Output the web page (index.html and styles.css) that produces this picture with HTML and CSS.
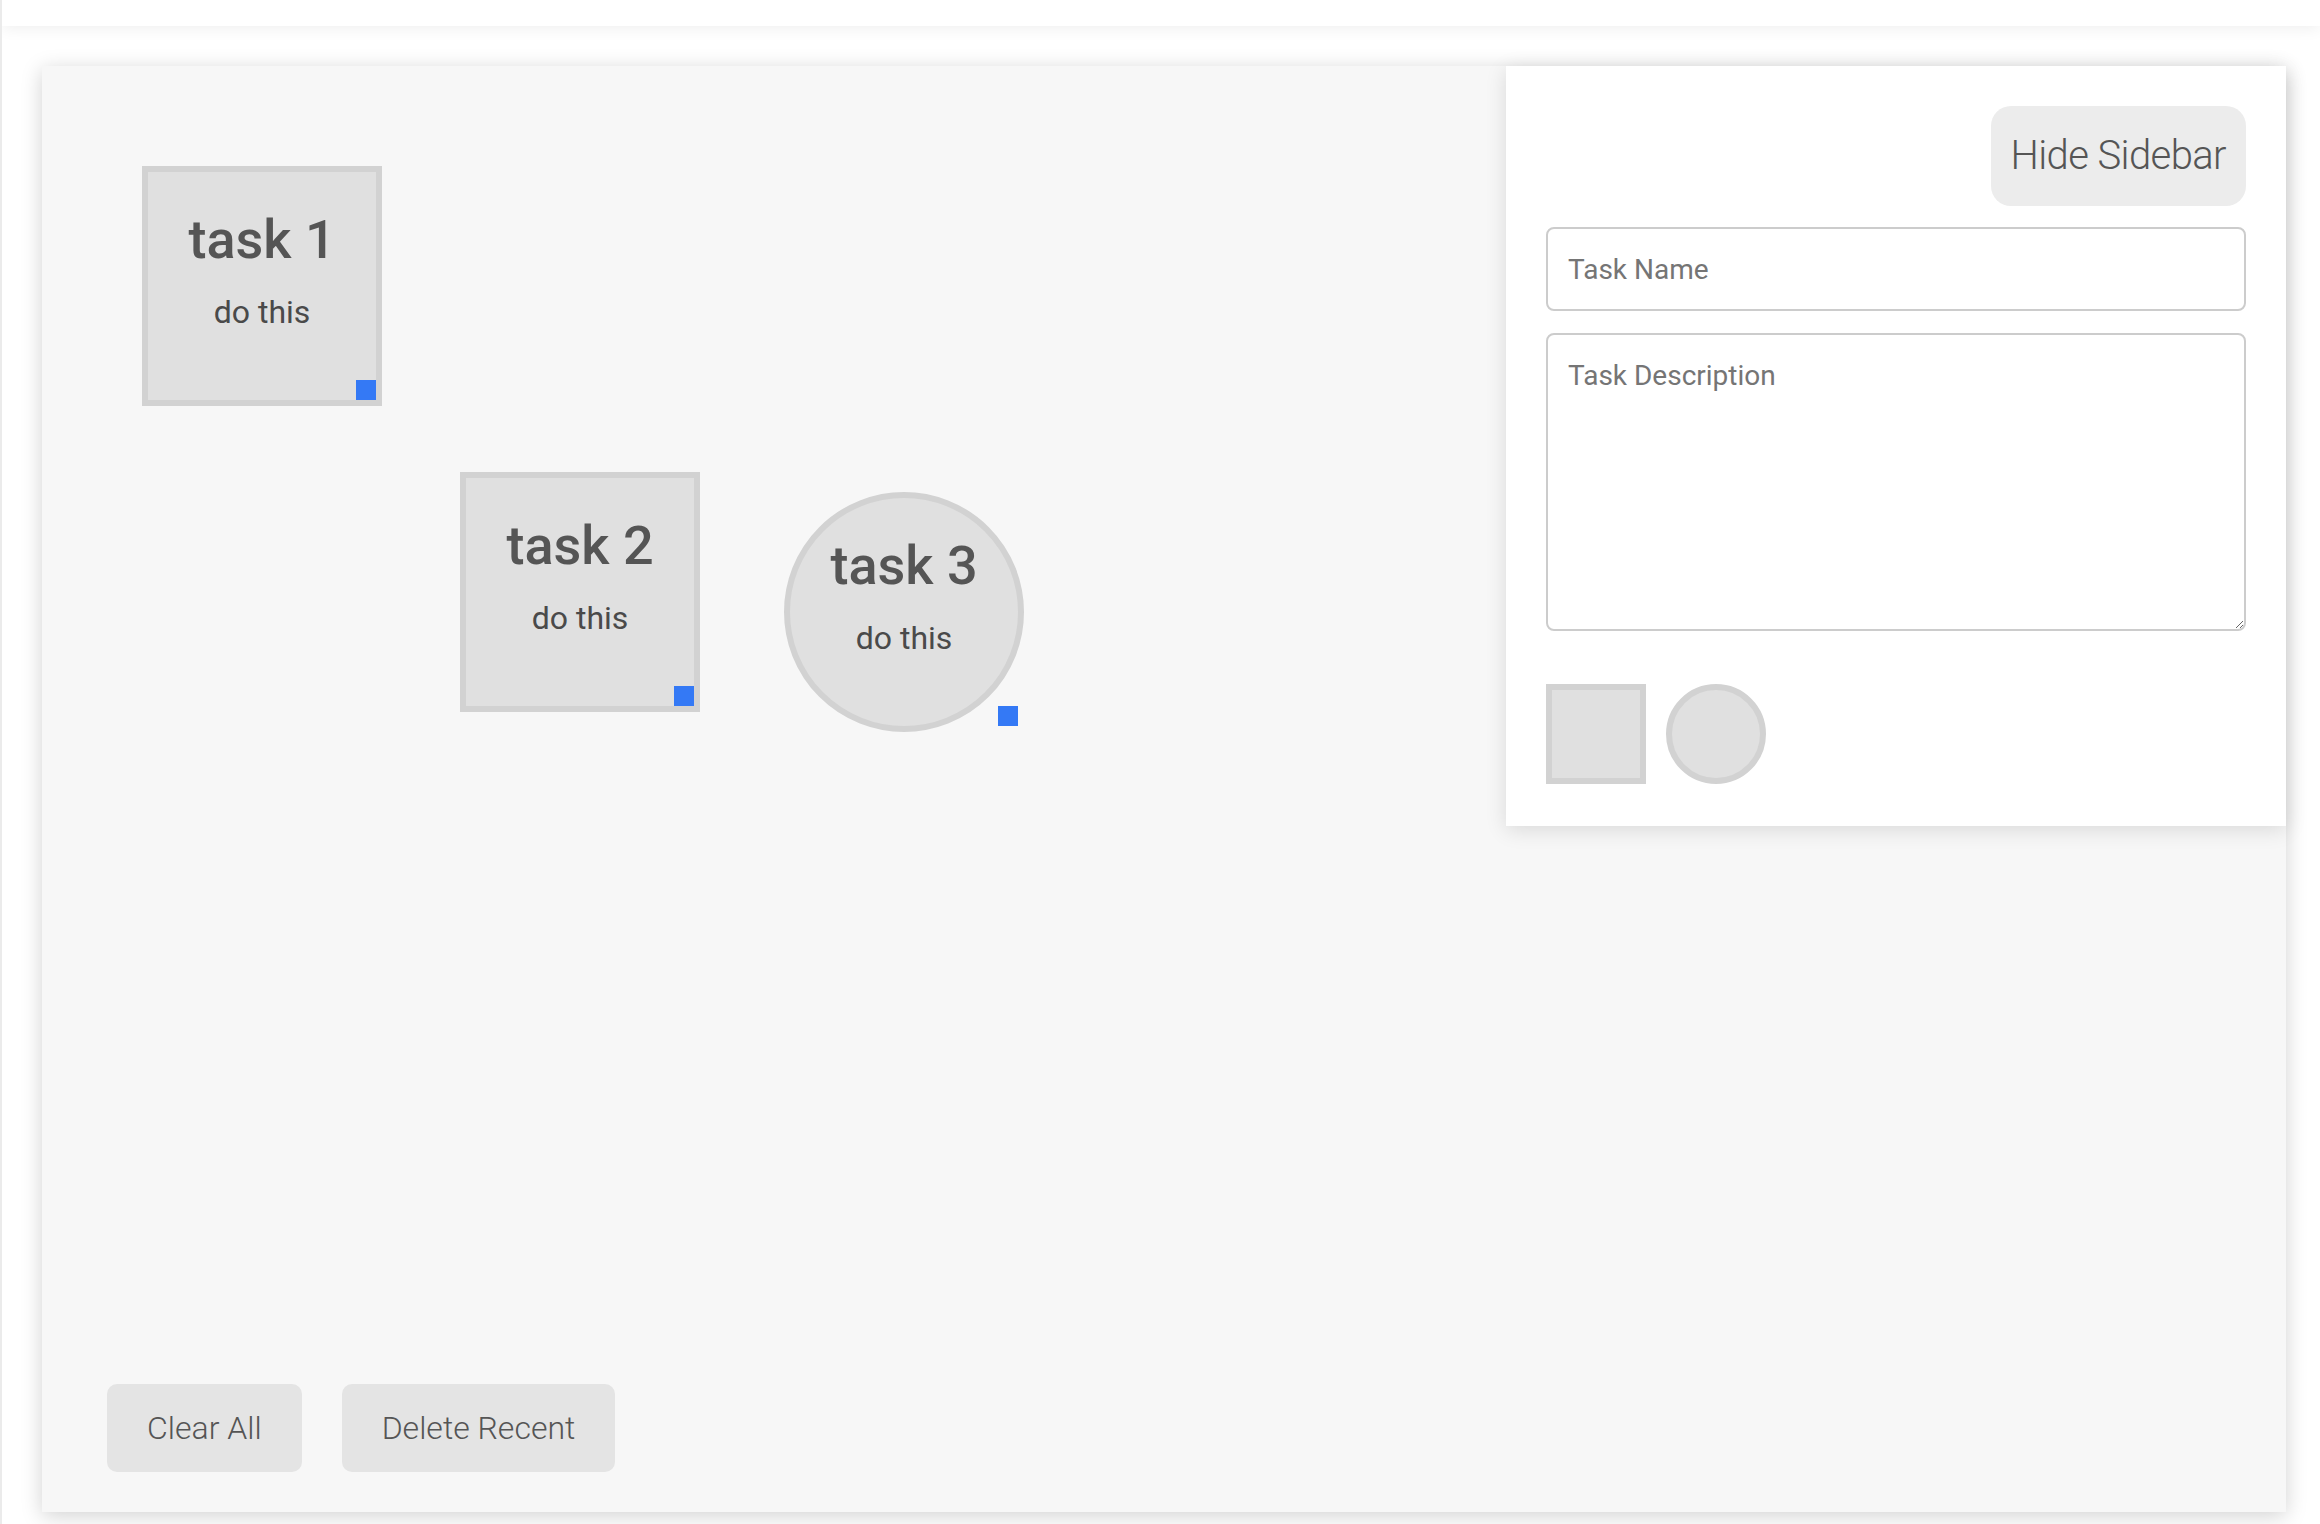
FILE: index.html
```html
<!DOCTYPE html>
<html lang="en">
<head>
<meta charset="utf-8">
<title>Task Board</title>
<link rel="stylesheet" href="styles.css">
</head>
<body>
<div class="page">
  <header class="topbar"></header>
  <main class="main">
    <section class="board">
      <div class="task task-square" style="left:100px;top:100px;">
        <h2 class="task-title">task 1</h2>
        <p class="task-desc">do this</p>
        <span class="handle"></span>
      </div>
      <div class="task task-square" style="left:418px;top:406px;">
        <h2 class="task-title">task 2</h2>
        <p class="task-desc">do this</p>
        <span class="handle"></span>
      </div>
      <div class="task task-circle" style="left:742px;top:426px;">
        <h2 class="task-title">task 3</h2>
        <p class="task-desc">do this</p>
        <span class="handle"></span>
      </div>

      <div class="actions">
        <button class="btn-soft">Clear All</button>
        <button class="btn-soft">Delete Recent</button>
      </div>

      <aside class="sidebar">
        <button class="btn-hide">Hide Sidebar</button>
        <input class="field field-name" type="text" placeholder="Task Name">
        <textarea class="field field-desc" placeholder="Task Description"></textarea>
        <div class="shapes">
          <span class="shape shape-square"></span>
          <span class="shape shape-circle"></span>
        </div>
      </aside>
    </section>
  </main>
</div>
</body>
</html>
```

FILE: styles.css
```css
* { box-sizing: border-box; }

html, body {
  margin: 0;
  padding: 0;
  background: #ffffff;
  font-family: Roboto, "Liberation Sans", Arial, sans-serif;
}

.page {
  border-left: 2px solid #ebebeb;
  min-height: 100vh;
  overflow: hidden;
}

.topbar {
  height: 26px;
  background: #ffffff;
  box-shadow: 0 2px 16px rgba(0, 0, 0, 0.07);
  position: relative;
  z-index: 1;
}

.main {
  padding: 40px 34px 40px 40px;
}

.board {
  position: relative;
  height: 1446px;
  background: #f7f7f7;
  box-shadow: 0 4px 20px rgba(0, 0, 0, 0.18);
  display: flex;
  flex-direction: column;
  justify-content: flex-end;
  padding: 0 0 40px 65px;
}

.task {
  position: absolute;
  width: 240px;
  height: 240px;
  background: #e0e0e0;
  border: 6px solid #d2d2d2;
  display: flex;
  flex-direction: column;
  align-items: center;
  padding-top: 41px;
  color: #555555;
}

.task-circle { border-radius: 50%; }

.task-title {
  margin: 0;
  font-size: 54px;
  line-height: 54px;
  font-weight: 500;
  color: #555555;
}

.task-desc {
  margin: 29px 0 0;
  font-size: 32px;
  line-height: 32px;
  font-weight: 400;
  color: #4a4a4a;
}

.handle {
  position: absolute;
  right: 0;
  bottom: 0;
  width: 20px;
  height: 20px;
  background: #3479f5;
}

.actions {
  display: flex;
  gap: 40px;
}

.btn-soft {
  font-family: Roboto, "Liberation Sans", Arial, sans-serif;
  font-size: 32px;
  line-height: 32px;
  font-weight: 300;
  color: #555555;
  background: #e4e4e4;
  border: none;
  border-radius: 10px;
  padding: 28px 40px;
}

.sidebar {
  position: absolute;
  top: 0;
  right: 0;
  width: 780px;
  background: #ffffff;
  box-shadow: 0 4px 20px rgba(0, 0, 0, 0.12);
  padding: 40px 40px 42px;
  display: flex;
  flex-direction: column;
}

.btn-hide {
  align-self: flex-end;
  font-family: Roboto, "Liberation Sans", Arial, sans-serif;
  font-size: 40px;
  line-height: 40px;
  font-weight: 300;
  color: #555555;
  background: #ececec;
  border: none;
  border-radius: 20px;
  padding: 30px 20px;
  letter-spacing: -0.6px;
  margin-bottom: 21px;
}

.field {
  width: 100%;
  border: 2px solid #cccccc;
  border-radius: 8px;
  background: #ffffff;
  font-family: Roboto, "Liberation Sans", Arial, sans-serif;
  font-size: 28px;
  color: #333333;
  padding: 0 20px;
  outline: none;
}

.field::placeholder { color: #757575; }

.field-name {
  height: 84px;
  margin-bottom: 22px;
}

.field-desc {
  height: 298px;
  padding-top: 24px;
  margin-bottom: 53px;
  display: block;
}

.shapes {
  display: flex;
  gap: 20px;
}

.shape {
  width: 100px;
  height: 100px;
  background: #e0e0e0;
  border: 6px solid #d2d2d2;
}

.shape-circle { border-radius: 50%; }
```
